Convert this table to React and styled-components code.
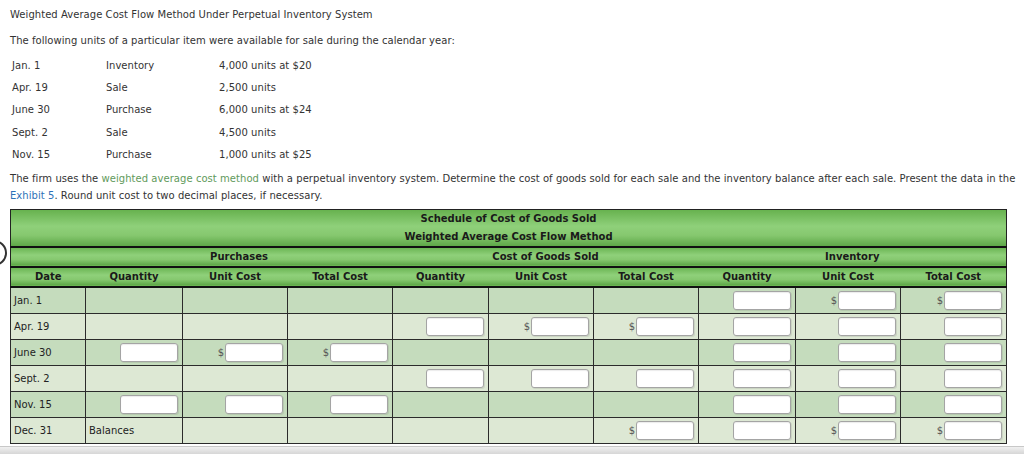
import React from "react";
import styled, { createGlobalStyle } from "styled-components";

const Global = createGlobalStyle`
  html, body { margin: 0; padding: 0; background: #fff; }
  body { font-family: "DejaVu Sans", Verdana, sans-serif; font-size: 10px; color: #333; letter-spacing: 0.05px; }
  * { box-sizing: border-box; }
`;

const Page = styled.div`
  position: relative;
  width: 1024px;
  height: 454px;
  overflow: hidden;
  padding: 8px 0 0 10px;
`;

const Title = styled.div`
  line-height: 13px;
  height: 13px;
`;

const Intro = styled.div`
  margin-top: 13px;
  line-height: 13px;
`;

const Events = styled.div`
  display: grid;
  grid-template-columns: 94px 113px auto;
  grid-auto-rows: 22.3px;
  align-items: center;
  margin-top: 7px;
  padding-left: 2px;
  line-height: 13px;
`;

const Para = styled.p`
  margin: 5px 0 0 0;
  line-height: 17px;
  width: 1014px;
`;

const GreenLink = styled.span`
  color: #5f9a5b;
`;
const BlueLink = styled.span`
  color: #2e72b8;
`;

const Table = styled.table`
  margin-top: 5px;
  border-collapse: collapse;
  table-layout: fixed;
  width: 996px;
  border: 1px solid #222;
  letter-spacing: 0;
`;

const HeadRow = styled.tr`
  height: ${(p) => p.$h}px;
  background: linear-gradient(#67b24f 0%, #8fd07a 45%, #86c86f 70%, #5ea848 100%);
  border-bottom: 2.5px solid #111;
`;

const Th = styled.th`
  padding: 0;
  font-weight: bold;
  color: #1a1a1a;
  font-size: 10px;
  text-align: center;
  line-height: 18px;
`;

const DataRow = styled.tr`
  height: 26px;
  background: ${(p) => (p.$dark ? "#c5dcbd" : "#dde8d4")};
`;

const Td = styled.td`
  padding: 0 4px 0 3px;
  border: 1.5px solid #2b2b2b;
  color: #222;
  font-size: 10px;
  vertical-align: middle;
`;

const CellInner = styled.div`
  display: flex;
  justify-content: flex-end;
  align-items: center;
  gap: 1px;
`;

const Dollar = styled.span`
  color: #555;
  font-size: 10px;
`;

const Input = styled.div`
  width: 58px;
  height: 19px;
  background: #fff;
  border: 1px solid #a4a4a4;
  border-radius: 3px;
  box-shadow: inset 0 1px 1px rgba(0, 0, 0, 0.08), 1px 1px 0 rgba(0, 0, 0, 0.08);
`;

const BottomBar = styled.div`
  position: absolute;
  left: 0;
  right: 0;
  bottom: 0;
  height: 8px;
  background: linear-gradient(#f0f0f0, #d6d6d6);
  border-top: 1px solid #c8c8c8;
`;

const Arc = styled.svg`
  position: absolute;
  left: 0;
  top: 238px;
`;

const Field = ({ v }) => {
  if (v === "i") return <CellInner><Input /></CellInner>;
  if (v === "$") return <CellInner><Dollar>$</Dollar><Input /></CellInner>;
  if (typeof v === "string" && v.length > 1) return <span>{v}</span>;
  return null;
};

const rows = [
  { d: "Jan. 1", c: ["", "", "", "", "", "", "i", "$", "$"] },
  { d: "Apr. 19", c: ["", "", "", "i", "$", "$", "i", "i", "i"] },
  { d: "June 30", c: ["i", "$", "$", "", "", "", "i", "i", "i"] },
  { d: "Sept. 2", c: ["", "", "", "i", "i", "i", "i", "i", "i"] },
  { d: "Nov. 15", c: ["i", "i", "i", "", "", "", "i", "i", "i"] },
  { d: "Dec. 31", c: ["Balances", "", "", "", "", "$", "i", "$", "$"] },
];

const widths = [75, 97, 105, 105, 96, 105, 105, 97, 105, 106];

export default function App() {
  return (
    <>
      <Global />
      <Page>
        <Title>Weighted Average Cost Flow Method Under Perpetual Inventory System</Title>
        <Intro>The following units of a particular item were available for sale during the calendar year:</Intro>
        <Events>
          <span>Jan. 1</span><span>Inventory</span><span>4,000 units at $20</span>
          <span>Apr. 19</span><span>Sale</span><span>2,500 units</span>
          <span>June 30</span><span>Purchase</span><span>6,000 units at $24</span>
          <span>Sept. 2</span><span>Sale</span><span>4,500 units</span>
          <span>Nov. 15</span><span>Purchase</span><span>1,000 units at $25</span>
        </Events>
        <Para>
          The firm uses the <GreenLink>weighted average cost method</GreenLink> with a perpetual inventory system. Determine the cost of goods sold for each sale and the inventory balance after each sale. Present the data in the <BlueLink>Exhibit 5</BlueLink>. Round unit cost to two decimal places, if necessary.
        </Para>
        <Table>
          <colgroup>
            {widths.map((w, i) => <col key={i} style={{ width: w }} />)}
          </colgroup>
          <thead>
            <HeadRow $h={36}>
              <Th colSpan={10}>Schedule of Cost of Goods Sold<br />Weighted Average Cost Flow Method</Th>
            </HeadRow>
            <HeadRow $h={20}>
              <Th />
              <Th colSpan={3}>Purchases</Th>
              <Th colSpan={3}>Cost of Goods Sold</Th>
              <Th colSpan={3}>Inventory</Th>
            </HeadRow>
            <HeadRow $h={20}>
              <Th>Date</Th>
              <Th>Quantity</Th>
              <Th>Unit Cost</Th>
              <Th>Total Cost</Th>
              <Th>Quantity</Th>
              <Th>Unit Cost</Th>
              <Th>Total Cost</Th>
              <Th>Quantity</Th>
              <Th>Unit Cost</Th>
              <Th>Total Cost</Th>
            </HeadRow>
          </thead>
          <tbody>
            {rows.map((r, i) => (
              <DataRow key={r.d} $dark={i % 2 === 0}>
                <Td>{r.d}</Td>
                {r.c.map((v, j) => (
                  <Td key={j}><Field v={v} /></Td>
                ))}
              </DataRow>
            ))}
          </tbody>
        </Table>
        <Arc width="10" height="30" viewBox="0 0 10 30">
          <circle cx="-6" cy="15" r="12" fill="none" stroke="#333" strokeWidth="2" />
        </Arc>
        <BottomBar />
      </Page>
    </>
  );
}
